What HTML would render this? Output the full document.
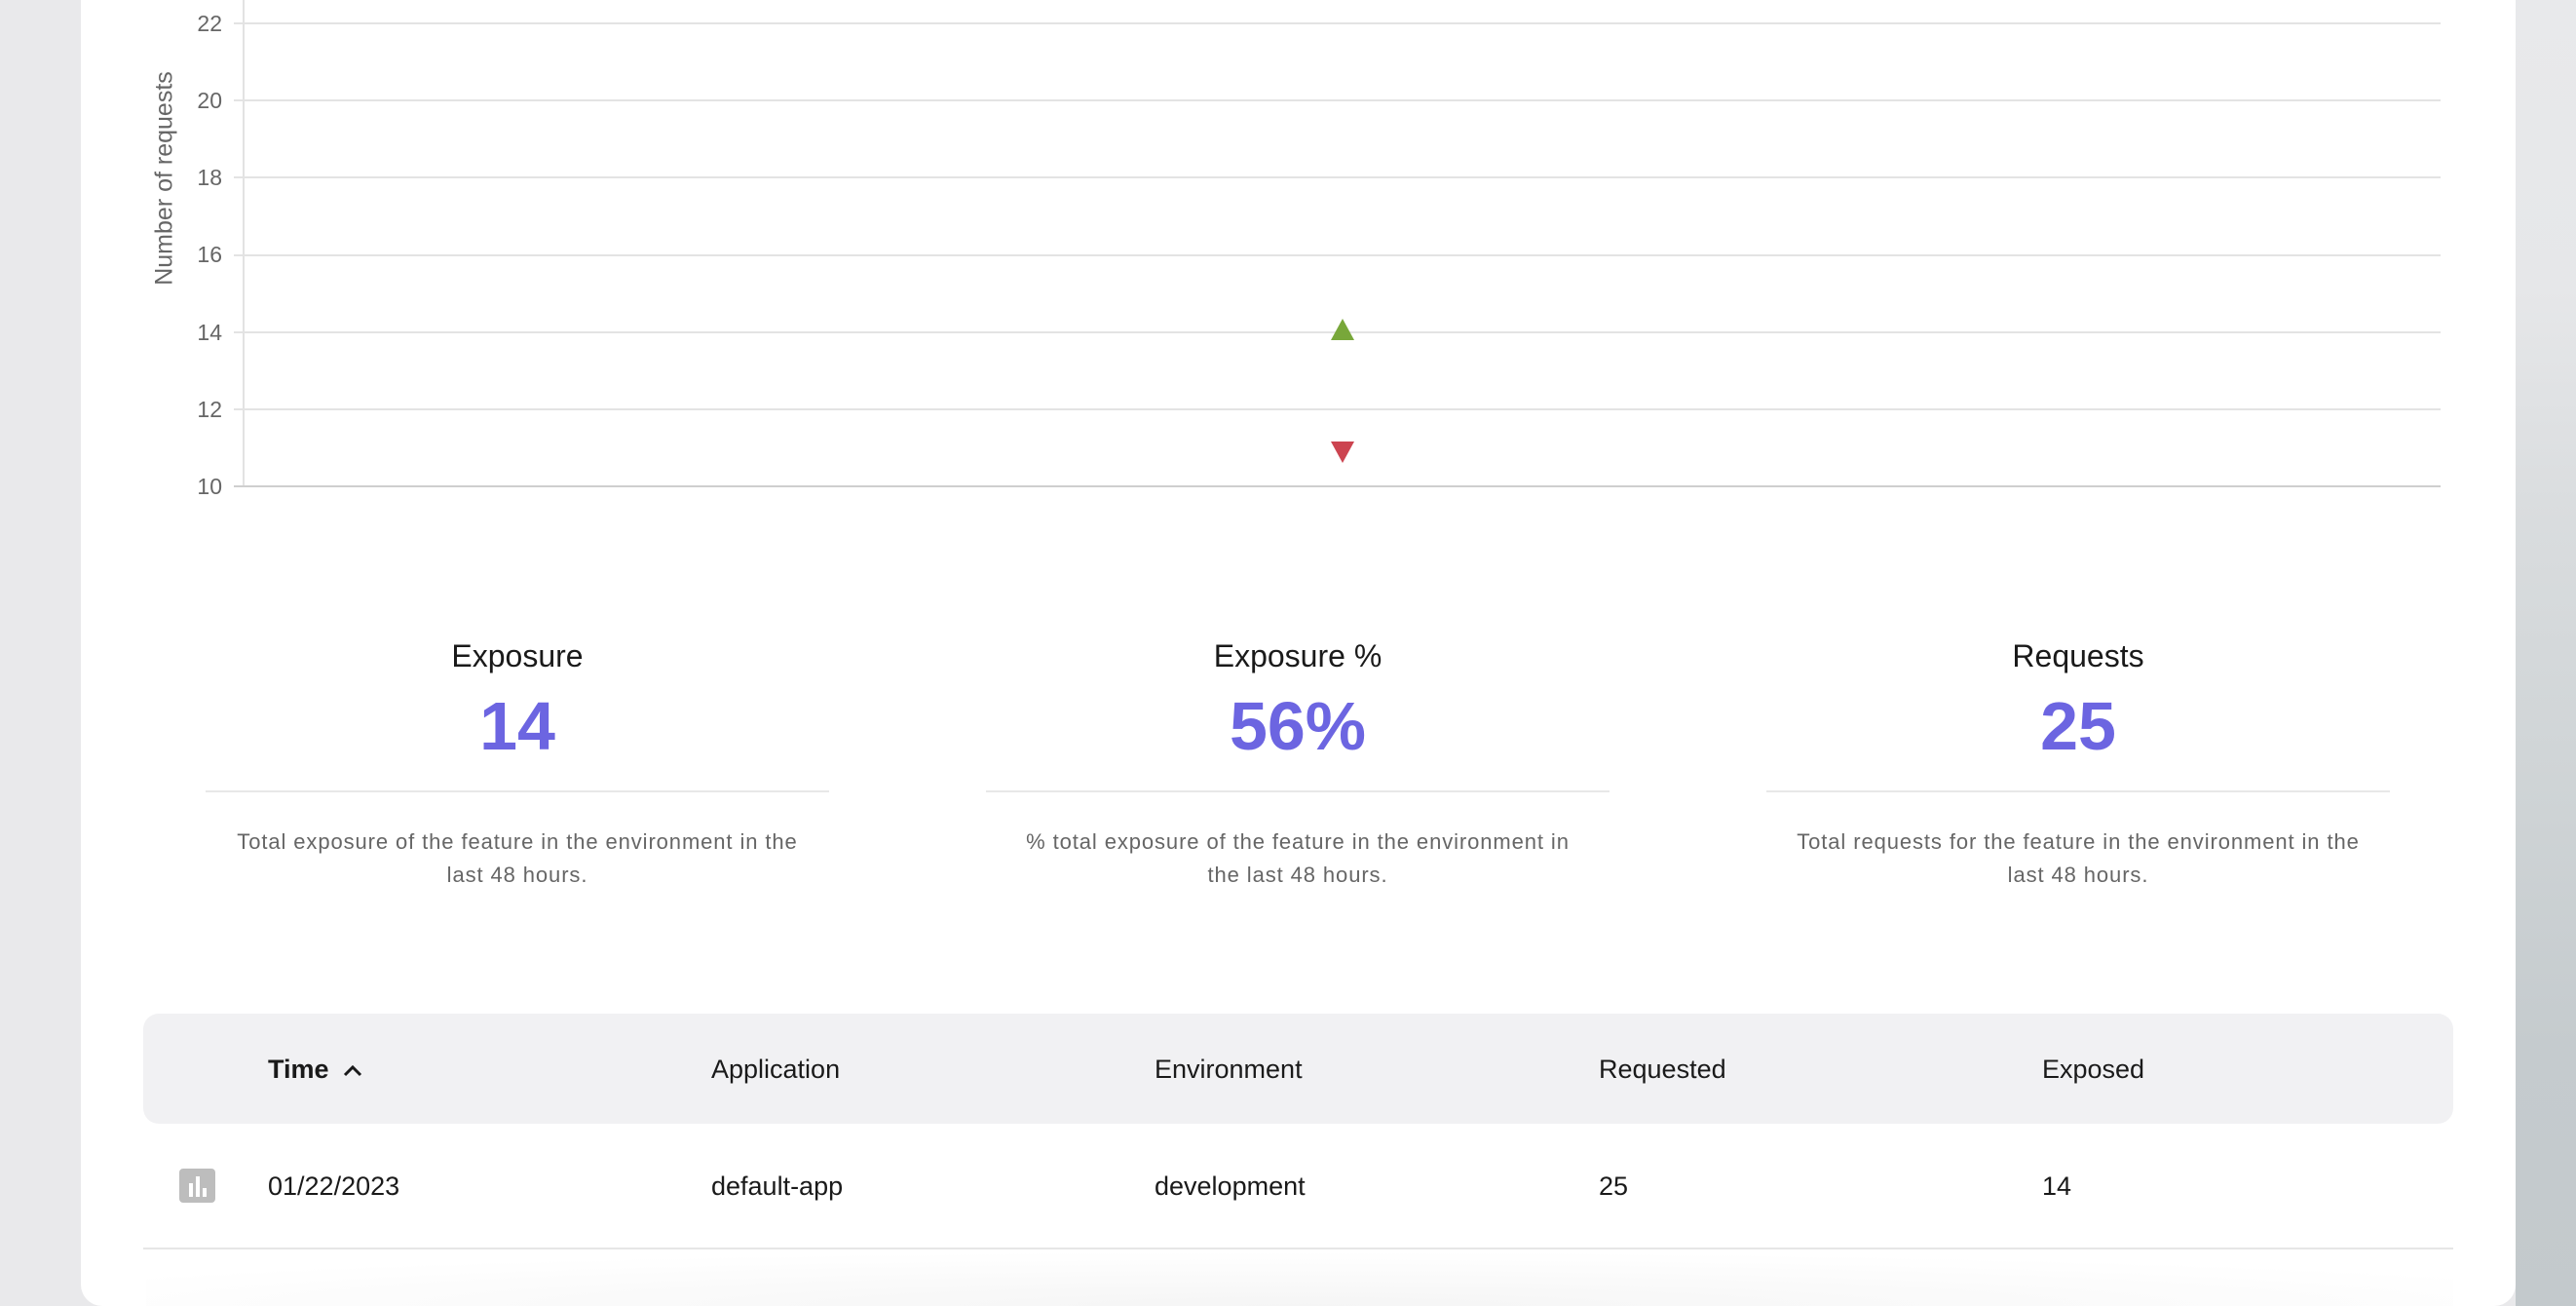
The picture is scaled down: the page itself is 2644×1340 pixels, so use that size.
<!DOCTYPE html>
<html><head><meta charset="utf-8"><style>
*{margin:0;padding:0;box-sizing:border-box}
body{width:2644px;height:1340px;overflow:hidden;background:#e9e9eb;font-family:"Liberation Sans",sans-serif;position:relative}
.bgr{position:absolute;left:2582px;top:0;width:62px;height:1340px;background:linear-gradient(180deg,#e8e9eb 0%,#e6e7e9 22%,#d9dcde 40%,#cfd4d6 60%,#c5cbce 80%,#c3c9cc 100%)}
.card{position:absolute;left:83px;top:-30px;width:2499px;height:1370px;background:#fff;border-radius:0 0 22px 22px}
.abs{position:absolute}
.grid{position:absolute;left:240px;width:2265px;height:2px;background:#e3e3e3}
.yl{position:absolute;width:60px;left:168px;text-align:right;font-size:23px;color:#666;line-height:26px}
.stat{position:absolute;width:640px;text-align:center}
.stat .t{font-size:32px;color:#1a1a1a;height:40px;line-height:40px}
.stat .n{font-size:70px;font-weight:bold;color:#6c65e1;line-height:80px;margin-top:12px}
.stat .d{border-top:2px solid #e8e8e8;margin-top:26px;padding-top:34px;font-size:22px;color:#666;line-height:34px;letter-spacing:.9px;padding-left:30px;padding-right:30px}
.th{position:absolute;top:1040px;left:147px;width:2371px;height:113px;background:#f1f1f3;border-radius:16px}
.c{position:absolute;font-size:27px;color:#1a1a1a;line-height:32px}
</style></head><body>
<div class="bgr"></div>
<div class="card"></div>
<div class="abs" style="left:249px;top:0;width:2px;height:500px;background:#e3e3e3"></div>
<div class="grid" style="top:23px"></div>
<div class="grid" style="top:102px"></div>
<div class="grid" style="top:181px"></div>
<div class="grid" style="top:261px"></div>
<div class="grid" style="top:340px"></div>
<div class="grid" style="top:419px"></div>
<div class="grid" style="top:498px;background:#cfcfcf"></div>
<div class="yl" style="top:11px">22</div>
<div class="yl" style="top:90px">20</div>
<div class="yl" style="top:169px">18</div>
<div class="yl" style="top:248px">16</div>
<div class="yl" style="top:328px">14</div>
<div class="yl" style="top:407px">12</div>
<div class="yl" style="top:486px">10</div>
<div class="abs" style="left:169px;top:183px;transform:translate(-50%,-50%) rotate(-90deg);font-size:25px;color:#666;white-space:nowrap">Number of requests</div>
<svg class="abs" style="left:1364px;top:325px" width="28" height="152"><polygon points="14,2 26,24 2,24" fill="#78a73a"/><polygon points="2,128 26,128 14,150" fill="#cc4450"/></svg>
<div class="stat" style="left:211px;top:653px"><div class="t">Exposure</div><div class="n">14</div><div class="d">Total exposure of the feature in the environment in the last 48 hours.</div></div>
<div class="stat" style="left:1012px;top:653px"><div class="t">Exposure %</div><div class="n">56%</div><div class="d">% total exposure of the feature in the environment in the last 48 hours.</div></div>
<div class="stat" style="left:1813px;top:653px"><div class="t">Requests</div><div class="n">25</div><div class="d" style="padding-left:14px;padding-right:14px">Total requests for the feature in the environment in the last 48 hours.</div></div>
<div class="th"></div>
<div class="c" style="left:275px;top:1081px;font-weight:bold">Time <svg width="22" height="16" style="margin-left:6px"><path d="M3 13 L11 5 L19 13" stroke="#1a1a1a" stroke-width="3" fill="none"/></svg></div>
<div class="c" style="left:730px;top:1081px">Application</div>
<div class="c" style="left:1185px;top:1081px">Environment</div>
<div class="c" style="left:1641px;top:1081px">Requested</div>
<div class="c" style="left:2096px;top:1081px">Exposed</div>
<svg class="abs" style="left:184px;top:1199px" width="37" height="35"><rect width="37" height="35" rx="4" fill="#bdbdbd"/><rect x="10" y="15" width="4" height="14" fill="#fff"/><rect x="17" y="8" width="4" height="21" fill="#fff"/><rect x="24" y="20" width="4" height="9" fill="#fff"/></svg>
<div class="c" style="left:275px;top:1201px">01/22/2023</div>
<div class="c" style="left:730px;top:1201px">default-app</div>
<div class="c" style="left:1185px;top:1201px">development</div>
<div class="c" style="left:1641px;top:1201px">25</div>
<div class="c" style="left:2096px;top:1201px">14</div>
<div class="abs" style="left:147px;top:1280px;width:2371px;height:2px;background:#e6e6e6"></div>
<div class="abs" style="left:150px;top:1284px;width:2368px;height:56px;background:radial-gradient(ellipse 60% 100% at 50% 100%,#f5f5f5,#ffffff)"></div>
</body></html>
